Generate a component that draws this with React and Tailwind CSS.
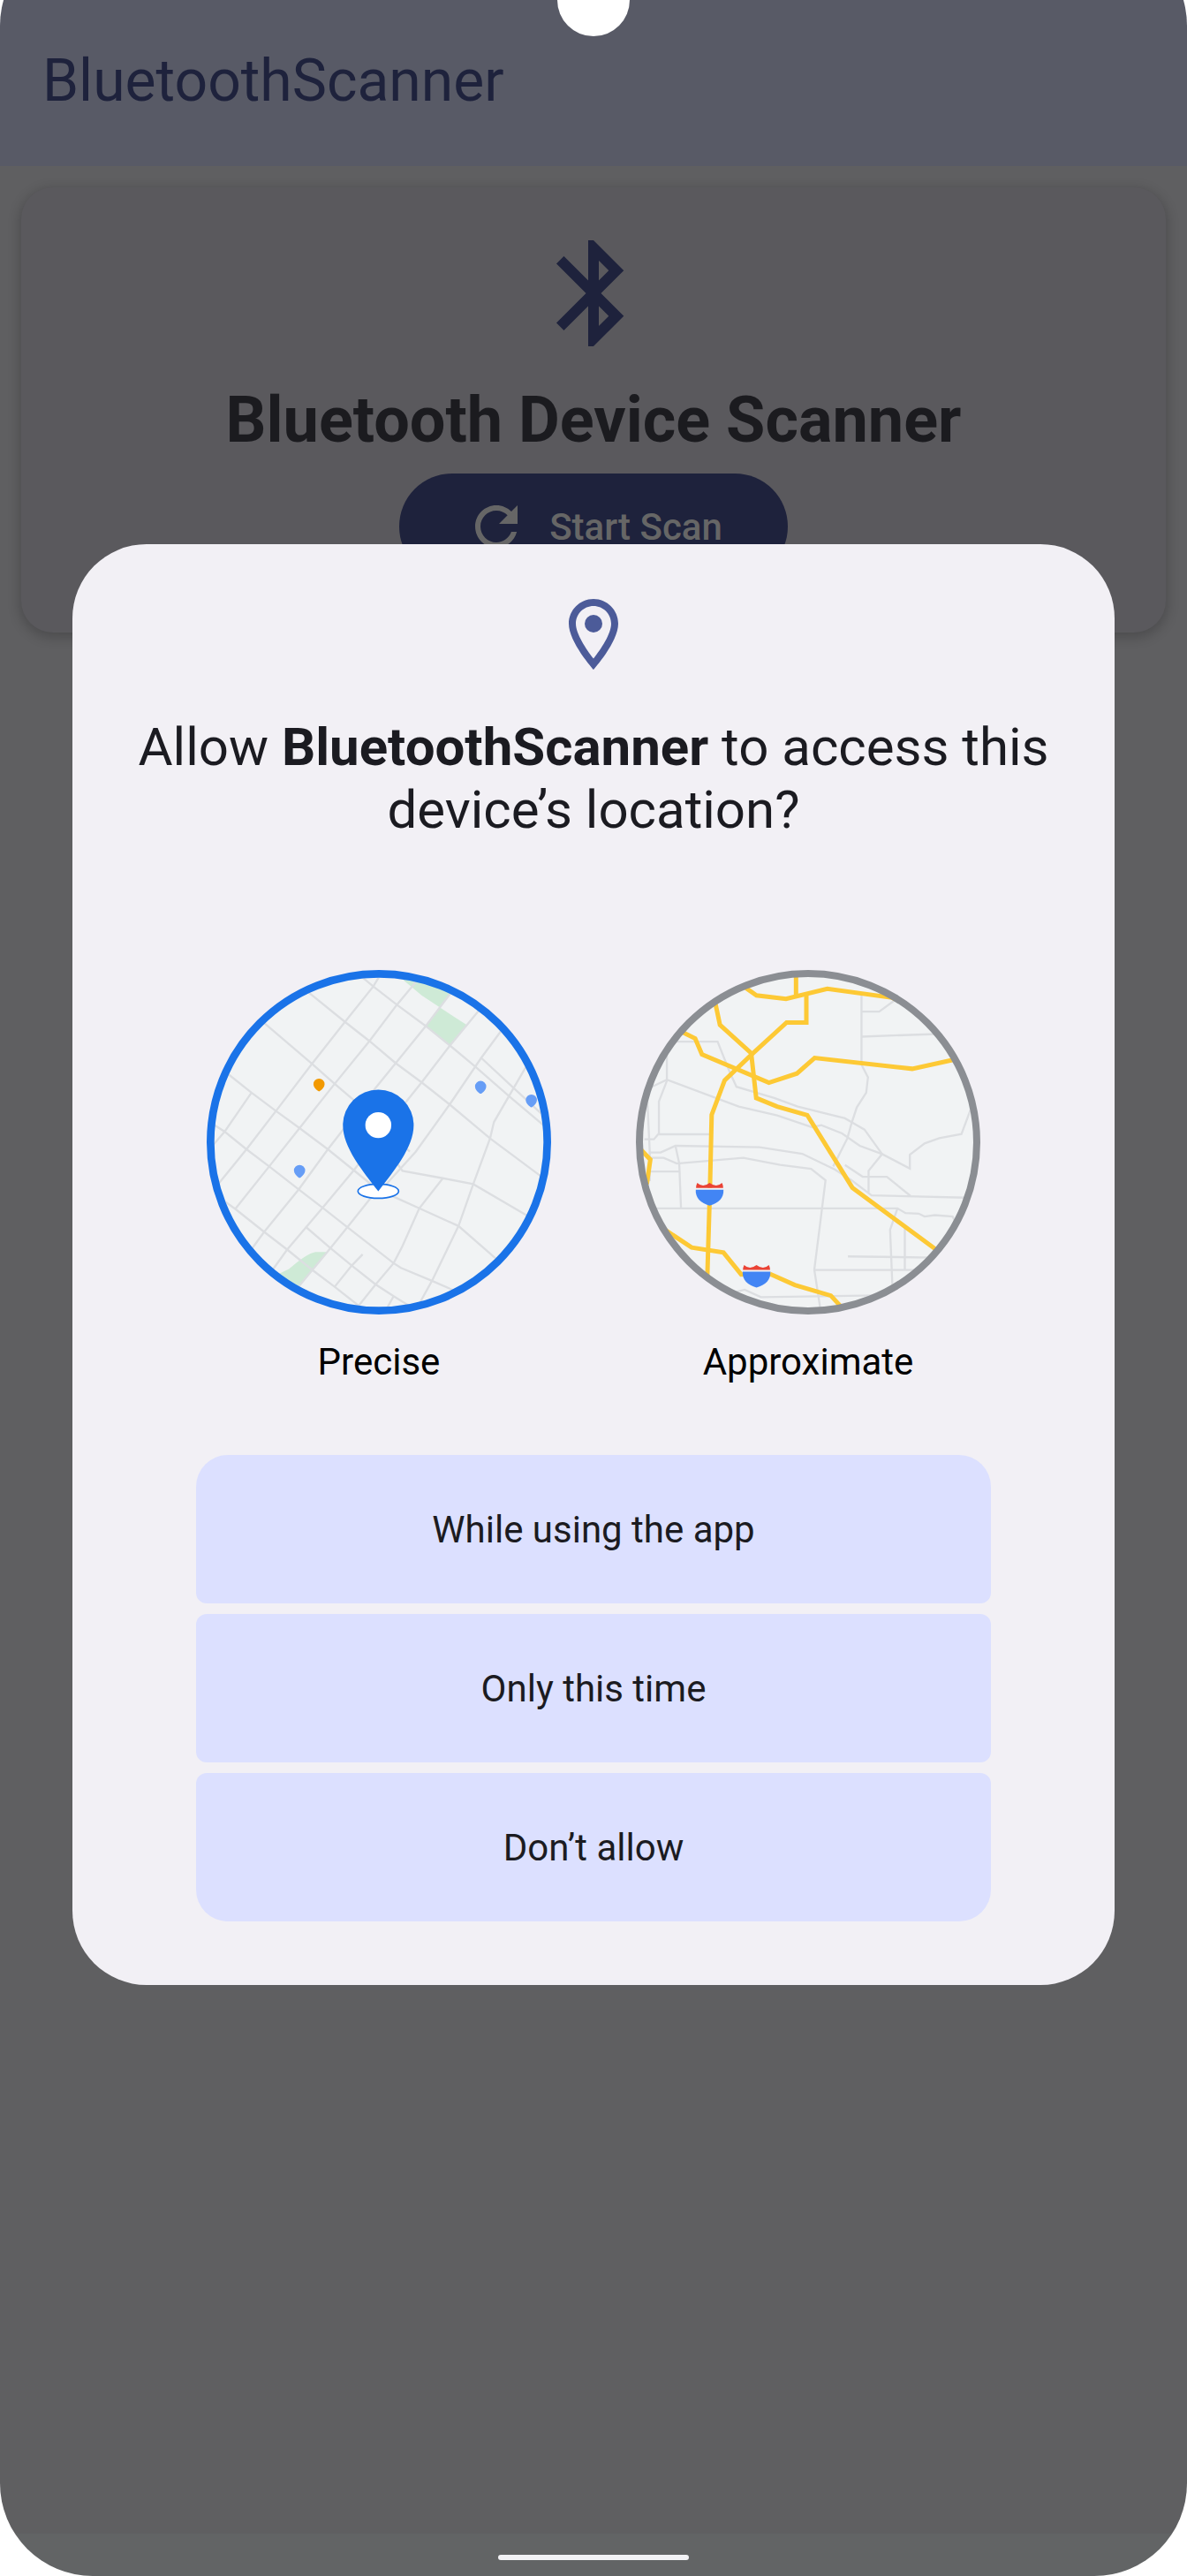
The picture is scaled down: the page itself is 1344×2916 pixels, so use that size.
const road = "fill-none stroke-[#dcdee1] stroke-[7]";
const highway = "fill-none stroke-[#fdc935] stroke-[15]";

function BluetoothIcon() {
  return (
    <svg viewBox="0 0 24 24" className="size-36 fill-[#1e223c]" aria-hidden="true">
      <path d="M17.71 7.71 12 2h-1v7.59L6.41 5 5 6.41 10.59 12 5 17.59 6.41 19 11 14.41V22h1l5.71-5.71-4.3-4.29 4.3-4.29zM13 5.83l1.88 1.88L13 9.59V5.83zm1.88 10.46L13 18.17v-3.76l1.88 1.88z" />
    </svg>
  );
}

function RefreshIcon() {
  return (
    <svg viewBox="0 0 24 24" className="size-18 fill-[#666666]" aria-hidden="true">
      <path d="M17.65 6.35C16.2 4.9 14.21 4 12 4c-4.42 0-7.99 3.58-7.99 8s3.57 8 7.99 8c3.73 0 6.84-2.55 7.73-6h-2.08c-.82 2.33-3.04 4-5.65 4-3.31 0-6-2.69-6-6s2.69-6 6-6c1.66 0 3.14.69 4.22 1.78L13 11h7V4l-2.35 2.35z" />
    </svg>
  );
}

function LocationIcon() {
  return (
    <svg viewBox="0 0 24 24" className="size-24 fill-[#4c5b99]" aria-hidden="true">
      <path d="M12 2C8.13 2 5 5.13 5 9c0 5.25 7 13 7 13s7-7.75 7-13c0-3.87-3.13-7-7-7zM7 9c0-2.76 2.24-5 5-5s5 2.24 5 5c0 2.88-2.88 7.19-5 9.88C9.92 16.21 7 11.85 7 9z" />
      <circle cx="12" cy="9" r="2.5" />
    </svg>
  );
}

function SmallPin({ x, y, color }) {
  return (
    <path
      d={`M${x - 19} ${y}a19 19 0 0 1 38 0c0 10-8 17-14 22q-5 5-10 0c-6-5-14-12-14-22z`}
      fill={color}
    />
  );
}

function Shield({ x, y }) {
  return (
    <g>
      <path d={`M${x - 47} ${y + 13}h94v-10h-94z`} fill="#f1f3f4" />
      <path
        d={`M${x - 42} ${y - 14}q8 8 20 9 12-1 22-9 10 8 22 9 12-1 20-9 4 8 4 17h-92q0-9 4-17z`}
        fill="#ea4335"
      />
      <path d={`M${x - 47} ${y + 9}h94c2 27-17 46-47 54-30-8-49-27-47-54z`} fill="#4285f4" />
    </g>
  );
}

function PreciseMap() {
  return (
    <svg viewBox="31 24 1168 1168" className="w-full" aria-hidden="true">
      <defs>
        <clipPath id="precise-clip">
          <circle cx="615" cy="608" r="570" />
        </clipPath>
      </defs>
      <circle cx="615" cy="608" r="572" fill="#f1f3f4" />
      <g clipPath="url(#precise-clip)">
        <path d="M690 40 860 60 870 95 820 150 760 110 700 60z" fill="#ceead6" />
        <path d="M820 150 912 210 856 280 774 214z" fill="#ceead6" />
        <path d="M260 1062 310 1038Q370 985 400 980H440L345 1095 300 1110z" fill="#ceead6" />
        <g className={road}>
          <path d="M560 50 596 80 676 142 774 214 856 280 940 350 1060 455 1180 556" />
          <path d="M370 95 500 200 583 265 672 340 760 405 855 480 992 595 1180 735" />
          <path d="M222 200 388 342 465 410 530 465 720 640" />
          <path d="M95 370 183 440 266 502 346 560 442 632 530 703 600 760 670 795 752 832 885 892 1020 1010" />
          <path d="M50 545 92 572 166 632 243 690 343 768 424 830 508 896 665 1018 690 1034 795 1078 880 1115" />
          <path d="M80 800 128 834 226 912 304 972 388 1040 465 1098 550 1165" />
          <path d="M366 894 450 966 523 1026 604 1090 665 1130 730 1170" />
          <path d="M620 40 596 80 500 200 388 342 266 502 166 632 70 750" />
          <path d="M740 65 676 142 583 265 465 410 346 560 243 690 128 834" />
          <path d="M183 440 92 572 55 615" />
          <path d="M860 100 774 214 672 340 605 422 442 632 343 768 226 912 185 968" />
          <path d="M955 160 856 280 760 405 700 480 530 703 424 830 304 972 255 1040" />
          <path d="M1030 230 962 322 855 480 740 640 640 750 585 800 508 896 440 980 345 1095" />
          <path d="M1115 350 1072 424 1005 540 992 595 935 750 885 892 795 1078 755 1150" />
          <path d="M962 322 1072 424 1165 510" />
          <path d="M670 670 695 705 832 730 935 750 1120 858" />
          <path d="M832 730 752 832 695 960 665 1018 604 1090 540 1170" />
          <path d="M560 988 523 1026 465 1098" />
          <path d="M665 1130 640 1175" />
        </g>
        <SmallPin x={412} y={411} color="#f29900" />
        <SmallPin x={346} y={704} color="#669df6" />
        <SmallPin x={960} y={419} color="#669df6" />
        <SmallPin x={1132} y={465} color="#669df6" />
      </g>
      <ellipse cx="613" cy="774" rx="69" ry="24" fill="#ffffff" stroke="#1a73e8" strokeWidth="5" />
      <path
        d="M613 774C560 705 493 625 493 550a120 120 0 0 1 240 0C733 625 666 705 613 774z"
        fill="#1a73e8"
      />
      <circle cx="613" cy="550" r="44" fill="#ffffff" />
      <circle cx="615" cy="608" r="571" fill="none" stroke="#1a73e8" strokeWidth="26" />
    </svg>
  );
}

function ApproximateMap() {
  return (
    <svg viewBox="31 24 1168 1168" className="w-full" aria-hidden="true">
      <defs>
        <clipPath id="approximate-clip">
          <circle cx="615" cy="608" r="570" />
        </clipPath>
      </defs>
      <circle cx="615" cy="608" r="572" fill="#f1f3f4" />
      <g clipPath="url(#approximate-clip)">
        <g className={road}>
          <path d="M170 267H308L350 372 372 420 500 458 580 487 740 527 806 565 866 648 820 705V778" />
          <path d="M796 100V345L818 388 812 440 780 490 762 545 748 595 700 690" />
          <path d="M796 165H856L910 126" />
          <path d="M796 250 1050 241" />
          <path d="M136 300V400L109 470V578L92 598H60" />
          <path d="M85 420 136 396 380 487 510 517 628 557 660 550 730 578 790 620 866 648 960 697V650L1010 612 1060 594 1135 580 1165 500" />
          <path d="M109 581H284" />
          <path d="M70 470 78 640 78 740" />
          <path d="M75 643H115L165 620 450 625 595 647 705 700 760 735 830 788 1150 796" />
          <path d="M80 661H125L170 680 395 661 520 685 625 698 674 737 655 890 636 1040 656 1170" />
          <path d="M165 620 178 680 184 832" />
          <path d="M80 707H178" />
          <path d="M95 832H918L945 848 990 850 1010 860 1045 855 1105 860 1120 890" />
          <path d="M740 685 800 725H882L962 790" />
          <path d="M918 832 893 905 901 1100" />
          <path d="M943 890V1040" />
          <path d="M750 995 1040 999" />
          <path d="M636 1041H990" />
          <path d="M370 1115 400 1108 455 1133 850 1127" />
        </g>
        <g className={highway}>
          <path d="M400 82 440 110 540 122 680 88 900 118 945 138 975 168" />
          <path d="M574 40V115" />
          <path d="M609 105V202H542L422 312 332 398 288 515 282 770 273 1070" />
          <path d="M300 135 316 210 422 306 439 458 510 487 612 516 765 762 1060 980" />
          <path d="M185 233 232 256 255 310 482 406 577 375 637 322 968 359 1110 328" />
          <path d="M45 630 80 667 68 750" />
          <path d="M130 905 220 965 328 982 388 1056 480 1052 570 1092 692 1128 740 1180" />
        </g>
        <Shield x={281} y={760} />
        <Shield x={440} y={1038} />
      </g>
      <circle cx="615" cy="608" r="572" fill="none" stroke="#8b8e93" strokeWidth="24" />
    </svg>
  );
}

function AccuracyOption({ label, selected, children }) {
  return (
    <button
      type="button"
      role="radio"
      aria-checked={selected}
      className="flex w-[390px] flex-col items-center text-black"
    >
      {children}
      <span className="mt-[26px] text-[42px] leading-[56px]">{label}</span>
    </button>
  );
}

function DialogAction({ className, children }) {
  return (
    <button
      type="button"
      className={`h-42 w-full bg-[#dce0ff] pt-0.5 text-[42px] leading-[56px] text-[#1b1b21] ${className}`}
    >
      {children}
    </button>
  );
}

export default function App() {
  return (
    <div className="relative flex min-h-screen flex-col overflow-hidden bg-[#5f5f61] font-[Roboto,sans-serif]">
      <header className="bg-[#585a66] px-12 pt-13 pb-14">
        <h1 className="text-[66px] leading-[80px] text-[#1e223c]">BluetoothScanner</h1>
      </header>

      <main className="flex-1 px-6 pt-6">
        <section className="flex flex-col items-center rounded-[36px] bg-[#5a595d] px-12 pt-12 pb-15 shadow-[0_4px_14px_2px_rgba(0,0,0,0.2)]">
          <BluetoothIcon />
          <h2 className="mt-6 text-[72px] leading-[96px] font-bold text-[#1b1b1f]">
            Bluetooth Device Scanner
          </h2>
          <button
            type="button"
            className="mt-3 flex h-30 min-w-110 items-center justify-center gap-6 rounded-full bg-[#1e223c] text-[42px] font-medium text-[#666666]"
          >
            <RefreshIcon />
            Start Scan
          </button>
        </section>
      </main>

      <div className="flex h-12 items-center justify-center bg-[#626465] pt-1.5">
        <div className="h-1.5 w-54 rounded-full bg-[#f2f2f5]" />
      </div>

      <div
        role="dialog"
        aria-labelledby="permission-title"
        className="absolute inset-x-[82px] top-[616px] flex flex-col items-center rounded-[84px] bg-[#f2f0f5] px-[60px] pt-[54px] pb-18"
      >
        <LocationIcon />
        <h2
          id="permission-title"
          className="mt-11 text-center text-[60px] leading-[71px] text-[#1b1b21]"
        >
          Allow <b>BluetoothScanner</b> to access this device’s location?
        </h2>
        <div role="radiogroup" aria-label="Location accuracy" className="mt-[146px] flex gap-24">
          <AccuracyOption label="Precise" selected>
            <PreciseMap />
          </AccuracyOption>
          <AccuracyOption label="Approximate" selected={false}>
            <ApproximateMap />
          </AccuracyOption>
        </div>
        <div className="mt-[77px] flex w-full max-w-[900px] flex-col gap-3">
          <DialogAction className="rounded-t-[36px] rounded-b-xl">While using the app</DialogAction>
          <DialogAction className="rounded-xl">Only this time</DialogAction>
          <DialogAction className="rounded-t-xl rounded-b-[36px]">Don’t allow</DialogAction>
        </div>
      </div>

      {/* Rounded display corners and camera cutout */}
      <div className="pointer-events-none absolute inset-x-0 -top-19 bottom-0 rounded-[105px] shadow-[0_0_0_60px_#ffffff]" />
      <div className="pointer-events-none absolute -top-[41px] left-1/2 size-[82px] -translate-x-1/2 rounded-full bg-white" />
    </div>
  );
}
